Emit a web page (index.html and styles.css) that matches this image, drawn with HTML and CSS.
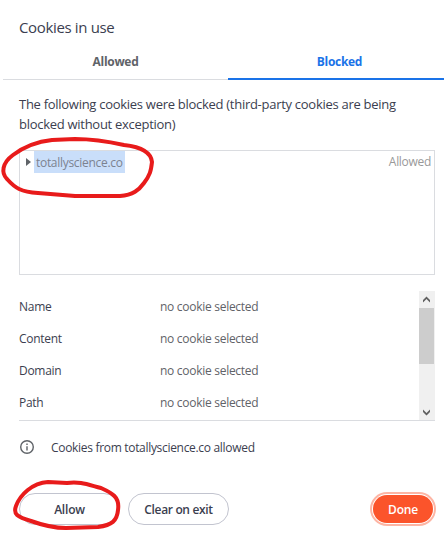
FILE: index.html
```
<!DOCTYPE html>
<html lang="en">
<head>
<meta charset="utf-8">
<title>Cookies in use</title>
<link rel="stylesheet" href="styles.css">
</head>
<body>
<main class="dialog">
  <h1 class="title"><span>Cookies in use</span></h1>
  <nav class="tabs">
    <div class="tab"><span>Allowed</span></div>
    <div class="tab active"><span>Blocked</span></div>
  </nav>
  <p class="intro"><span>The following cookies were blocked (third-party cookies are being</span><br><span>blocked without exception)</span></p>
  <section class="tree">
    <svg class="arrow" viewBox="0 0 5 8"><path d="M0 0L5 4L0 8Z"/></svg>
    <span class="site">totallyscience.co</span>
    <span class="state">Allowed</span>
  </section>
  <section class="details">
    <dl class="fields">
      <dt>Name</dt><dd>no cookie selected</dd>
      <dt>Content</dt><dd>no cookie selected</dd>
      <dt>Domain</dt><dd>no cookie selected</dd>
      <dt>Path</dt><dd>no cookie selected</dd>
    </dl>
    <div class="scrollbar">
      <svg class="chevron" viewBox="0 0 16 17"><path d="M4 11.5V9L7.5 5.5L11 9V11.5L7.5 8Z"/></svg>
      <div class="thumb"></div>
      <svg class="chevron down" viewBox="0 0 16 17"><path d="M4 6.5V9L7.5 12.5L11 9V6.5L7.5 10Z"/></svg>
    </div>
  </section>
  <div class="info">
    <svg viewBox="0 0 14 14"><circle cx="7" cy="7" r="6.3"/><path d="M7 6.2V10.5M7 3.5V5"/></svg>
    <span>Cookies from totallyscience.co allowed</span>
  </div>
  <footer class="actions">
    <button class="button"><span>Allow</span></button>
    <button class="button clear"><span>Clear on exit</span></button>
    <button class="button done"><span>Done</span></button>
  </footer>
</main>
<svg class="marks" viewBox="0 0 444 535">
  <path d="M52 140C33 142 21 149 13 155C2 163 1 173 7 179C15 188 21 192 38 193L75 196L120 196C133 195 139 190 144 183C150 175 151 171 152 162C151 152 142 147 124 145C106 141 92 139 75 139Z"/>
  <path d="M48 482C32 483 20 495 16 506C13 514 17 517 31 521C42 525 53 528 66 528L98 527C112 525 117 521 118 510C120 497 112 493 101 488C89 485 80 481 67 483Z"/>
</svg>
</body>
</html>
```
FILE: styles.css
```
* { box-sizing: border-box; }
body { margin: 0; background: #fff; font-family: "Open Sans", "Noto Sans", sans-serif; font-size: 12px; color: #3b3e4f; }
.dialog { width: 444px; height: 535px; padding-left: 3px; display: flex; flex-direction: column; overflow: hidden; }
.title { margin: 0; padding: 15px 0 0 16px; height: 46px; font-size: 15px; line-height: 24px; font-weight: 400; letter-spacing: -.35px; }
.tabs { height: 32px; display: grid; grid-template-columns: 225px 216px; }
.tab { border-bottom: 1px solid #dadce0; text-align: center; font-weight: 700; line-height: 32px; color: #5f6368; letter-spacing: -.3px; }
.tab.active { border-bottom: 2px solid #1a73e8; color: #1a73e8; padding-left: 7px; }
.intro { margin: 17px 0 0 16px; height: 55px; font-size: 13px; line-height: 20px; letter-spacing: -.28px; white-space: nowrap; }
.intro span { position: relative; top: -1px; }
.tree { margin-left: 16px; width: 416px; height: 125px; border: 1px solid #dadce0; display: flex; align-items: flex-start; }
.arrow { width: 5px; height: 8px; margin: 7px 0 0 6px; fill: #5f6368; }
.site { margin-left: 3px; width: 91px; height: 22px; padding-left: 2px; background: #c9defa; color: #7c8390; line-height: 23px; letter-spacing: -.3px; }
.state { margin-left: auto; margin-right: 3px; line-height: 21px; color: #999; letter-spacing: -.3px; }
.details { margin: 16px 0 0 16px; width: 416px; height: 130px; border-bottom: 1px solid #dadce0; display: flex; }
.fields { margin: 0; flex: 1; display: grid; grid-template-columns: 141px 1fr; grid-auto-rows: 32px; line-height: 32px; letter-spacing: -.28px; }
.fields dd { margin: 0; color: #5f6368; }
.scrollbar { width: 16px; height: 129px; background: #f0f0f0; display: flex; flex-direction: column; }
.chevron { width: 16px; height: 17px; fill: #606060; }
.chevron.down { margin-top: auto; }
.thumb { width: 15px; height: 56px; background: #cdcdcd; }
.info { margin: 16px 0 0 17px; height: 20px; display: flex; align-items: center; gap: 17px; letter-spacing: -.31px; }
.info svg { width: 14px; height: 14px; fill: none; stroke: #5f6368; stroke-width: 1.4; }
.actions { margin: 36px 0 0 16px; width: 414px; display: flex; align-items: center; gap: 8px; }
.button { width: 101px; height: 32px; padding: 0; border: 1px solid #c2c4cf; border-radius: 16px; background: #fff; color: #3b3e4f; font: 600 12px "Open Sans", sans-serif; letter-spacing: -.2px; }
.clear { letter-spacing: -.35px; }
.done { margin-left: auto; width: 60px; height: 28px; border: 0; background: #fb542b; color: #fff; box-shadow: 0 0 0 1px #fff, 0 0 0 3px #fdb5a4; }
.marks { position: absolute; left: 0; top: 0; width: 444px; height: 535px; fill: none; stroke: #e81b1b; stroke-width: 4; stroke-linejoin: round; pointer-events: none; }
```
